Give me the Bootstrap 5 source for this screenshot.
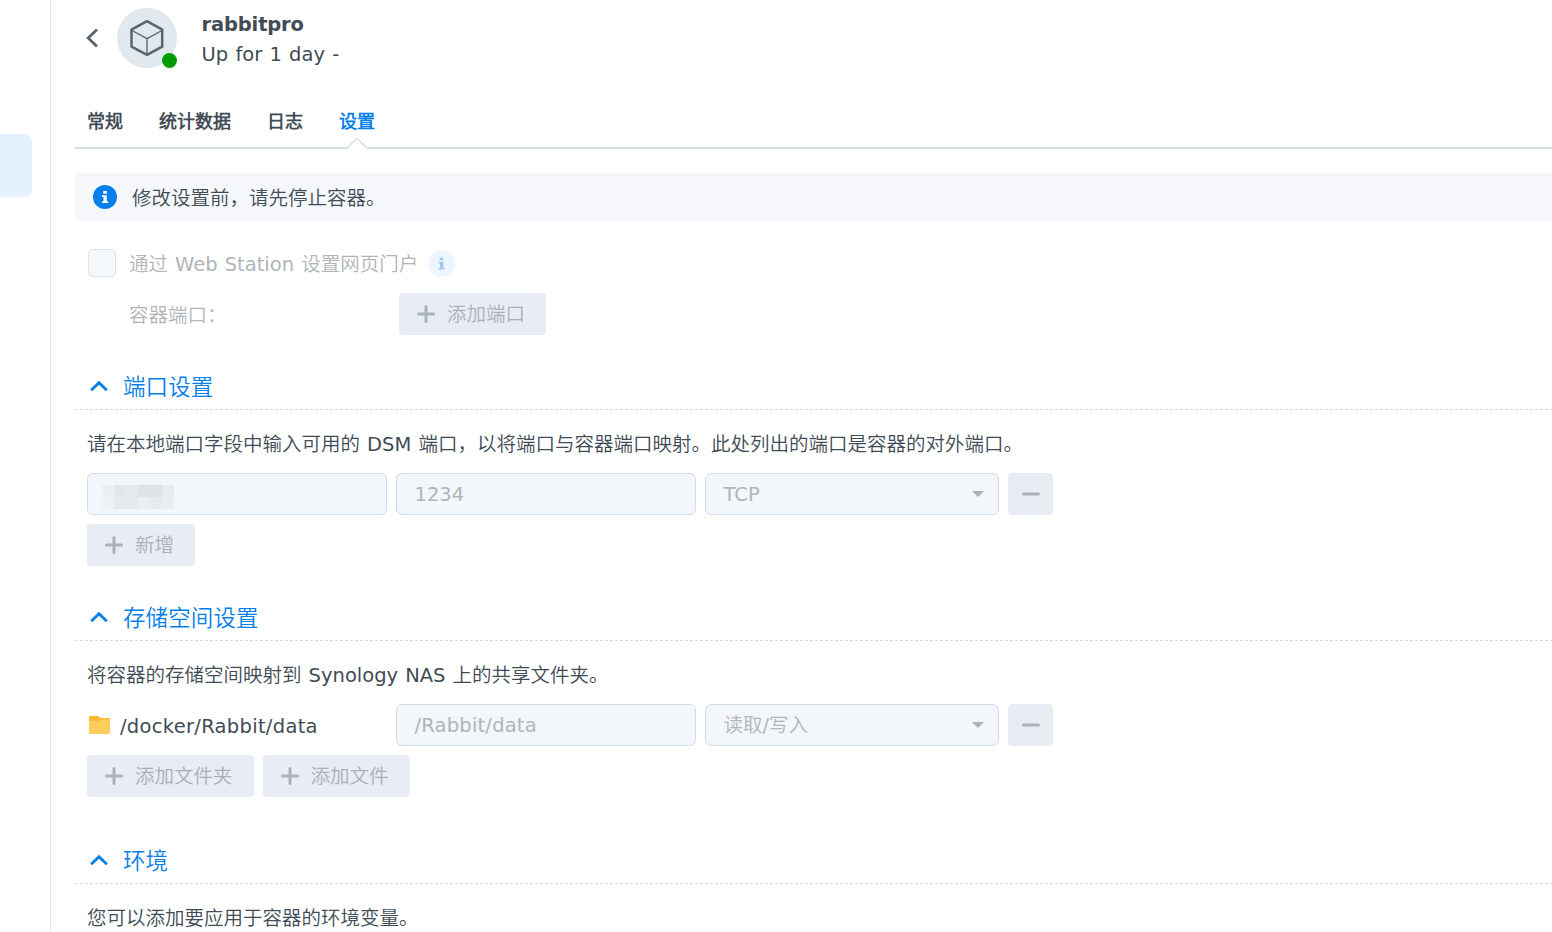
<!DOCTYPE html>
<html lang="zh-CN">
<head>
<meta charset="utf-8">
<meta name="viewport" content="width=device-width, initial-scale=1">
<title>rabbitpro</title>
<link href="https://cdn.jsdelivr.net/npm/bootstrap@5.3.0/dist/css/bootstrap.min.css" rel="stylesheet">
<style>
  body { font-family: "DejaVu Sans", "Noto Sans CJK SC DemiLight", "Noto Sans CJK SC Light", "Noto Sans CJK SC", sans-serif; font-size: 19.5px; line-height: 30px; word-spacing: .9px; color: #414b55; background: #fff; }
  svg { display: block; flex: none; }
  .side-pane { width: 51px; border-right: 1px solid #dfe6ee; padding-top: 134px; }
  .side-active { width: 32px; height: 63px; background: #e5f1fe; border-radius: 0 7px 7px 0; }
  .main-pane { padding: 8px 0 0 24px; min-width: 0; }
  .avatar { width: 60px; height: 60px; background: #e1e8ee; }
  .status-dot { width: 15px; height: 15px; right: 0; bottom: 0; background: #009d00; }
  .title-block { height: 60px; margin-left: 24.5px; padding-top: 2px; }
  .title-text { font-weight: 700; letter-spacing: -.15px; }
  .sub-text { letter-spacing: .05px; }
  .tab-strip { height: 45px; margin-top: 36px; padding-left: 12px; gap: 36px; border-bottom: 2px solid #d6e0e8; font-size: 18px; font-weight: 700; line-height: 35px; }
  .tab-strip .nav-link { padding: 0; color: #414b55; position: relative; }
  .tab-strip .nav-link.active { color: #057feb; }
  .tab-notch { position: absolute; left: 8px; bottom: -2px; }
  .notice { height: 48px; margin-top: 24px; padding-left: 18px; gap: 15px; background: #f5f7fb; border-radius: 6px 0 0 6px; }
  .txt { margin-top: 3px; }
  .muted { color: #b0b5ba; }
  .box-check { width: 28px; height: 28px; border: 1.5px solid #d6e1ea; border-radius: 5px; background: #f5f8fb; }
  .portal-row { height: 30px; margin: 27px 0 0 13px; }
  .portal-text { margin-left: 13px; }
  .portal-info { margin-left: 10px; }
  .port-row { height: 42px; margin: 15px 0 0 54px; }
  .port-row .lbl { width: 270px; }
  .btn-soft, .btn-soft:disabled { height: 42px; border: 0; border-radius: 4px; background: #e8edf5; color: #a9b0b7; opacity: 1; font-size: 19.5px; line-height: 30px; padding: 0 21px 0 18px; gap: 12px; display: inline-flex; align-items: center; }
  .btn-soft .txt { margin-top: 1px; }
  .btn-soft.btn-minus { width: 45px; padding: 0; justify-content: center; }
  .sec-head { height: 45px; padding-left: 15px; gap: 15px; color: #057feb; font-size: 22.5px; background: repeating-linear-gradient(90deg, #dadddf 0 3px, transparent 3px 5px) bottom / 100% 1px no-repeat; }
  .sec-head svg { margin-bottom: 3px; }
  .sec-head span { margin-bottom: 2px; letter-spacing: .1px; }
  .sec-body { padding-left: 12px; }
  .desc { margin: 20px 0 13px; height: 30px; white-space: nowrap; }
  .cells { gap: 9px; }
  .field { width: 300px; height: 42px; border: 1px solid #d0dde7; border-radius: 6px; background: #f3f6fa; color: #afb5ba; padding: 0 18px 0 17.5px; display: flex; align-items: center; }
  .field .txt { margin-top: 2px; }
  .field-sel { width: 294px; padding-right: 13px; justify-content: space-between; }
  .folder-cell { width: 300px; gap: 9px; padding-left: 2px; }
  .path-text { letter-spacing: .3px; }
  .path-dim { letter-spacing: .2px; }
  .pix { display: grid; grid-template-columns: 12px 12px 12px 12px 12px 12px; grid-template-rows: 12px 12px; margin: 6px 0 0 -4px; }
</style>
</head>
<body class="overflow-hidden">
<div class="d-flex vh-100">
  <aside class="side-pane flex-shrink-0"><div class="side-active"></div></aside>
  <main class="main-pane flex-grow-1">
    <header class="d-flex align-items-start">
      <svg width="42" height="60" viewBox="0 0 42 60" fill="none" stroke="#59656f" stroke-width="2.8"><path d="M22 21.500 13.200 30 22 38.500"/></svg>
      <div class="avatar rounded-circle position-relative">
        <svg width="60" height="60" viewBox="0 0 60 60" fill="none" stroke="#59656f" stroke-linejoin="round"><path stroke-width="2.500" d="M30 13.200 45.200 21.600V38.600L30 46.900 14.500 38.600V21.600Z"/><path stroke-width="1.400" d="M15 22.500 30 30.700 45 22.500M30 30.700V46"/></svg>
        <span class="status-dot rounded-circle position-absolute"></span>
      </div>
      <div class="title-block">
        <div class="title-text">rabbitpro</div>
        <div class="sub-text">Up for 1 day -</div>
      </div>
    </header>

    <nav class="nav tab-strip flex-nowrap">
      <a class="nav-link" href="#">常规</a>
      <a class="nav-link" href="#">统计数据</a>
      <a class="nav-link" href="#">日志</a>
      <a class="nav-link active" href="#">设置
        <svg class="tab-notch" width="20" height="12" viewBox="0 0 20 12"><path d="M0 12 10 1.500 20 12Z" fill="#fff"/><path d="M0 11 10 1.200 20 11" fill="none" stroke="#d6e0e8" stroke-width="1.500"/></svg>
      </a>
    </nav>

    <div class="notice d-flex align-items-center">
      <svg width="24" height="24" viewBox="0 0 24 24"><circle cx="12" cy="12" r="12" fill="#057feb"/><path fill="#fff" d="M10.200 6h3.600v2.700h-3.600zM9 10.200h4.800v6H15V18H9v-1.800h1.500v-4.300H9z"/></svg>
      <span class="txt">修改设置前，请先停止容器。</span>
    </div>

    <div class="portal-row d-flex align-items-center muted">
      <span class="box-check"></span>
      <span class="txt portal-text">通过 Web Station 设置网页门户</span>
      <svg class="portal-info" width="27" height="27" viewBox="0 0 27 27"><circle cx="13.500" cy="13.500" r="13.500" fill="#edf6fe"/><path fill="#9bccf7" d="M11.700 7.500h3.600v2.700h-3.600zM10.500 11.700h4.800v6h1.200v1.800h-6v-1.800H12v-4.300h-1.500z"/></svg>
    </div>
    <div class="port-row d-flex align-items-center muted">
      <span class="txt lbl">容器端口：</span>
      <button class="btn btn-soft" disabled><svg width="18" height="18" viewBox="0 0 18 18" stroke="#a9b2ba" stroke-width="3" stroke-linecap="round"><path d="M1.500 9h15M9 1.500v15"/></svg><span class="txt">添加端口</span></button>
    </div>

    <section style="margin-top:30px">
      <div class="sec-head d-flex align-items-center"><svg width="18" height="12" viewBox="0 0 18 12" fill="none" stroke="#057feb" stroke-width="2.8"><path d="M1.200 10.200 9 2.700l7.800 7.500"/></svg><span>端口设置</span></div>
      <div class="sec-body">
        <p class="desc">请在本地端口字段中输入可用的 DSM 端口，以将端口与容器端口映射。此处列出的端口是容器的对外端口。</p>
        <div class="d-flex cells">
          <div class="field"><div class="pix">
            <i style="background:#edf0f2"></i><i style="background:#e3e7e9"></i><i style="background:#e7eaec"></i><i style="background:#dfe3e5"></i><i style="background:#dfe3e5"></i><i style="background:#e9ecee"></i>
            <i style="background:#eff2f4"></i><i style="background:#e7eaec"></i><i style="background:#e6e9eb"></i><i style="background:#ebeef0"></i><i style="background:#e8ebed"></i><i style="background:#ebeef0"></i>
          </div></div>
          <div class="field"><span class="txt">1234</span></div>
          <div class="field field-sel"><span class="txt">TCP</span><svg width="14" height="8" viewBox="0 0 14 8"><path d="M1 1h12L7 7z" fill="#a9b2ba"/></svg></div>
          <button class="btn btn-soft btn-minus" disabled aria-label="删除"><svg width="18" height="4" viewBox="0 0 18 4"><rect y=".5" width="18" height="3" rx="1.500" fill="#a9b2ba"/></svg></button>
        </div>
        <div class="d-flex cells" style="margin-top:9px">
          <button class="btn btn-soft" disabled><svg width="18" height="18" viewBox="0 0 18 18" stroke="#a9b2ba" stroke-width="3" stroke-linecap="round"><path d="M1.500 9h15M9 1.500v15"/></svg><span class="txt">新增</span></button>
        </div>
      </div>
    </section>

    <section style="margin-top:30px">
      <div class="sec-head d-flex align-items-center"><svg width="18" height="12" viewBox="0 0 18 12" fill="none" stroke="#057feb" stroke-width="2.8"><path d="M1.200 10.200 9 2.700l7.800 7.500"/></svg><span>存储空间设置</span></div>
      <div class="sec-body">
        <p class="desc">将容器的存储空间映射到 Synology NAS 上的共享文件夹。</p>
        <div class="d-flex cells">
          <div class="folder-cell d-flex align-items-center">
            <svg width="22" height="18" viewBox="0 0 22 18"><path d="M0 1Q0 0 1 0h8l3 2h8q1 0 1 1v6H0z" fill="#ffb92e"/><path d="M0 5h9.500l3-1.500H21V17q0 1-1 1H1q-1 0-1-1z" fill="#ffcf5c"/></svg>
            <span class="txt path-text">/docker/Rabbit/data</span>
          </div>
          <div class="field"><span class="txt path-dim">/Rabbit/data</span></div>
          <div class="field field-sel"><span class="txt">读取/写入</span><svg width="14" height="8" viewBox="0 0 14 8"><path d="M1 1h12L7 7z" fill="#a9b2ba"/></svg></div>
          <button class="btn btn-soft btn-minus" disabled aria-label="删除"><svg width="18" height="4" viewBox="0 0 18 4"><rect y=".5" width="18" height="3" rx="1.500" fill="#a9b2ba"/></svg></button>
        </div>
        <div class="d-flex cells" style="margin-top:9px">
          <button class="btn btn-soft" disabled><svg width="18" height="18" viewBox="0 0 18 18" stroke="#a9b2ba" stroke-width="3" stroke-linecap="round"><path d="M1.500 9h15M9 1.500v15"/></svg><span class="txt">添加文件夹</span></button>
          <button class="btn btn-soft" disabled><svg width="18" height="18" viewBox="0 0 18 18" stroke="#a9b2ba" stroke-width="3" stroke-linecap="round"><path d="M1.500 9h15M9 1.500v15"/></svg><span class="txt">添加文件</span></button>
        </div>
      </div>
    </section>

    <section style="margin-top:42px">
      <div class="sec-head d-flex align-items-center"><svg width="18" height="12" viewBox="0 0 18 12" fill="none" stroke="#057feb" stroke-width="2.8"><path d="M1.200 10.200 9 2.700l7.800 7.500"/></svg><span>环境</span></div>
      <div class="sec-body"><p class="desc">您可以添加要应用于容器的环境变量。</p></div>
    </section>
  </main>
</div>
<script src="https://cdn.jsdelivr.net/npm/bootstrap@5.3.0/dist/js/bootstrap.bundle.min.js"></script>
</body>
</html>
